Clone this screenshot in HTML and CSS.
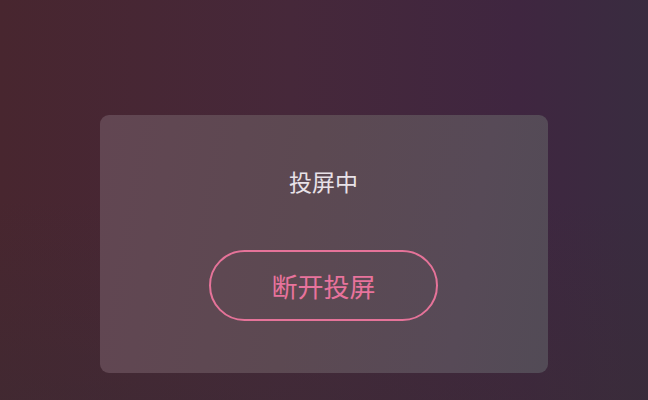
FILE: index.html
```html
<!DOCTYPE html>
<html lang="zh">
<head>
    <meta charset="UTF-8">
    <meta name="viewport" content="width=device-width, initial-scale=1.0">
    <title>投屏</title>
    <link rel="stylesheet" href="styles.css">
</head>
<body>
    <div class="screen">
        <div class="dialog">
            <div class="status">投屏中</div>
            <button class="disconnect">断开投屏</button>
        </div>
    </div>
</body>
</html>
```

FILE: styles.css
```css
* {
    box-sizing: border-box;
}

body {
    margin: 0;
    font-family: "Noto Sans CJK SC", "Noto Sans", sans-serif;
}

.screen {
    width: 648px;
    height: 400px;
    padding-top: 115px;
    display: flex;
    justify-content: center;
    background:
        linear-gradient(180deg, rgba(54, 48, 64, 0) 50%, rgba(58, 44, 52, 0.45) 100%),
        linear-gradient(90deg, #48262f 0%, #46283a 45%, #3f2640 80%, #392c40 100%);
}

.dialog {
    width: 448px;
    height: 258px;
    margin-left: -1px;
    border-radius: 9px;
    background: linear-gradient(100deg, #624652 0%, #5c4952 45%, #574a57 80%, #524b56 100%);
    display: flex;
    flex-direction: column;
    align-items: center;
}

.status {
    margin-top: 50px;
    font-size: 23px;
    line-height: 32px;
    color: #e8e2e8;
}

.disconnect {
    margin-top: 53px;
    width: 229px;
    height: 71px;
    border: 2px solid #e57399;
    border-radius: 36px;
    background: transparent;
    color: #e8739c;
    font-family: inherit;
    font-size: 26px;
    padding: 0;
}
```
